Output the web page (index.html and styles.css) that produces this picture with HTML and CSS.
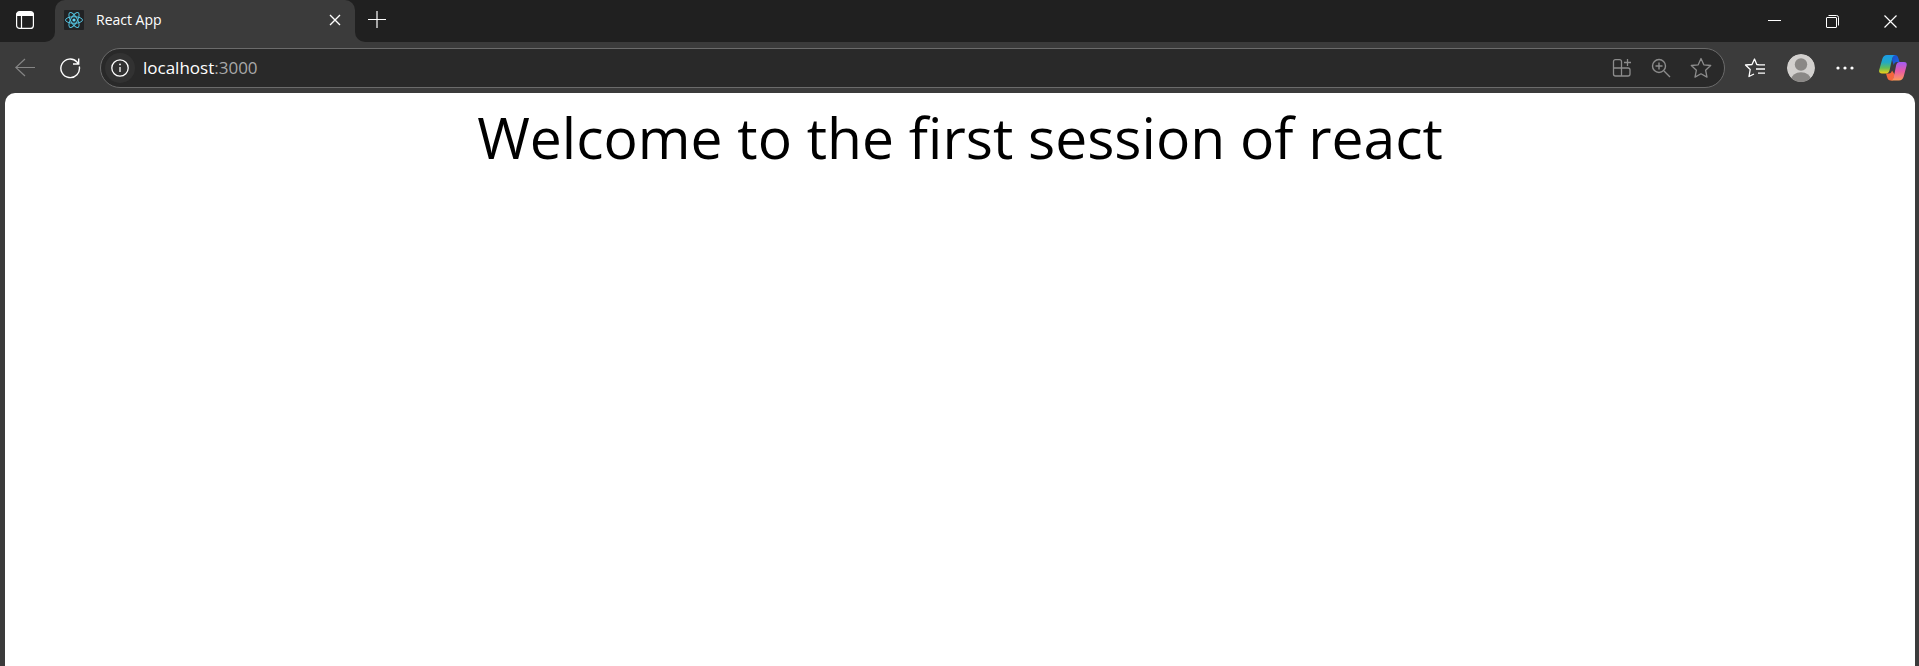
FILE: index.html
```html
<!DOCTYPE html>
<html lang="en">
<head>
<meta charset="utf-8">
<title>React App</title>
<link rel="stylesheet" href="styles.css">
</head>
<body>
<header class="browser">
  <div class="titlebar">
    <div class="workspace">
      <button class="icon-button" aria-label="Tab actions">
        <svg width="20" height="20" viewBox="0 0 20 20" fill="none" stroke="#fff" stroke-width="1.2"><rect x="1.6" y="1.6" width="16.8" height="16.8" rx="3"/><path d="M2 3.5Q3 2 5 2H15Q17 2 18 3.5V5.500H2Z" fill="#fff"/><path d="M6.5 6V18"/></svg>
      </button>
    </div>
    <div class="tab-slot">
      <div class="tab">
        <svg class="favicon" width="20" height="20" viewBox="0 0 20 20" fill="none" stroke="#53c1de" stroke-width="1"><rect width="20" height="20" rx="1" fill="#212224" stroke="none"/><ellipse cx="10" cy="10" rx="8.5" ry="3.3"/><ellipse cx="10" cy="10" rx="8.5" ry="3.3" transform="rotate(60 10 10)"/><ellipse cx="10" cy="10" rx="8.5" ry="3.3" transform="rotate(120 10 10)"/><circle cx="10" cy="10" r="1.6" fill="#61dafb" stroke="none"/></svg>
        <span class="tab-title">React App</span>
        <button class="icon-button tab-close" aria-label="Close tab">
          <svg width="12" height="12" viewBox="0 0 12 12" stroke="#fff" stroke-width="1.4"><path d="M1 1L11 11M11 1L1 11"/></svg>
        </button>
      </div>
    </div>
    <div class="title-rest">
      <button class="icon-button new-tab" aria-label="New tab">
        <svg width="18" height="18" viewBox="0 0 18 18" stroke="#fff" stroke-width="1.2"><path d="M0 9.5H18M9 1V18"/></svg>
      </button>
      <div class="window-controls">
        <button class="window-button" aria-label="Minimize">
          <svg width="13" height="13" viewBox="0 0 13 13" stroke="#fff"><path d="M0 5.5H13"/></svg>
        </button>
        <button class="window-button" aria-label="Restore">
          <svg width="13" height="13" viewBox="0 0 13 13" fill="none" stroke="#fff"><rect x=".5" y="2.5" width="10" height="10" rx=".5"/><path d="M2.5 .5H10.500Q12.5 .5 12.5 2.500V10.5"/></svg>
        </button>
        <button class="window-button" aria-label="Close">
          <svg width="13" height="13" viewBox="0 0 13 13" stroke="#fff" stroke-width="1.2"><path d="M.5 .5L12.5 12.5M12.5 .5L.5 12.5"/></svg>
        </button>
      </div>
    </div>
  </div>
  <div class="toolbar">
    <div class="nav">
      <button class="icon-button" aria-label="Back">
        <svg width="20" height="20" viewBox="0 0 20 20" fill="none" stroke="#858585" stroke-width="1.2"><path d="M20 9.5H.8M10 1L.8 9.5L10 18"/></svg>
      </button>
      <button class="icon-button" aria-label="Refresh">
        <svg width="22" height="22" viewBox="0 0 22 22" fill="none" stroke="#fff" stroke-width="1.4"><path d="M20.3 9.5A9.3 9.3 0 1 1 18 5L19.7 7M19.7 1.5V7H14"/></svg>
      </button>
    </div>
    <div class="address">
      <button class="site-info" aria-label="Site information">
        <svg width="18" height="18" viewBox="0 0 18 18" fill="none" stroke="#fff" stroke-width="1.3"><circle cx="9" cy="9" r="8.2"/><path d="M9 8V13"/><circle cx="9" cy="5.4" r=".9" fill="#fff" stroke="none"/></svg>
      </button>
      <a class="url" href="#page"><span class="host">localhost</span>:3000</a>
      <div class="address-actions">
        <button class="icon-button" aria-label="App available">
          <svg width="20" height="20" viewBox="0 0 20 20" fill="none" stroke="#8c8c8c" stroke-width="1.3"><path d="M9.5 10V3.6Q9.5 1.6 7.5 1.6H3.5Q1.5 1.6 1.5 3.6V16Q1.5 18 3.5 18H16Q18 18 18 16V12Q18 10 16 10H1.5M9.5 10V18M15.5 1V8M12 4.5H19"/></svg>
        </button>
        <button class="icon-button" aria-label="Zoom">
          <svg width="20" height="20" viewBox="0 0 20 20" fill="none" stroke="#8c8c8c" stroke-width="1.4"><circle cx="8" cy="8" r="6.5"/><path d="M13 13L19 19M8 4.5V11.5M4.5 8H11.5"/></svg>
        </button>
        <button class="icon-button" aria-label="Add to favorites">
          <svg width="22" height="22" viewBox="0 0 22 22" fill="none" stroke="#8c8c8c" stroke-width="1.3" stroke-linejoin="round"><path d="M11 1.5L13.8 7.8L20.7 8.5L15.6 13.2L17 20.1L11 16.8L5 20.1L6.4 13.2L1.3 8.5L8.2 7.8Z"/></svg>
        </button>
      </div>
    </div>
    <div class="tools">
      <button class="icon-button" aria-label="Favorites">
        <svg width="22" height="22" viewBox="0 0 22 22" fill="none" stroke="#fff" stroke-width="1.3" stroke-linejoin="round"><path d="M15.2 7.8L12.8 7.5L10.5 2L8 7.5L1.5 8L6.2 12.5L5 19.5L10 17M13 7.9H21M12 12H21M14 16.2H21"/></svg>
      </button>
      <button class="icon-button" aria-label="Profile">
        <svg width="28" height="28" viewBox="0 0 28 28"><defs><clipPath id="face"><circle cx="14" cy="14" r="14"/></clipPath></defs><g clip-path="url(#face)"><circle cx="14" cy="14" r="14" fill="#d2d0ce"/><circle cx="14" cy="10.5" r="6.2" fill="#8a8886"/><ellipse cx="14" cy="26" rx="10" ry="7.7" fill="#8a8886"/></g></svg>
      </button>
      <button class="icon-button" aria-label="Settings and more">
        <svg width="18" height="18" viewBox="0 0 18 18" fill="#fff"><circle cx="2" cy="9" r="1.6"/><circle cx="9" cy="9" r="1.6"/><circle cx="16" cy="9" r="1.6"/></svg>
      </button>
      <button class="icon-button copilot" aria-label="Copilot">
        <svg width="28" height="26" viewBox="0 0 28 26">
          <defs>
            <linearGradient id="cool" x1="0" y1="0" x2="0" y2="1"><stop offset="0" stop-color="#1b9be8"/><stop offset=".4" stop-color="#22a9c4"/><stop offset=".7" stop-color="#63bd57"/><stop offset="1" stop-color="#f3cf16"/></linearGradient>
            <linearGradient id="warm" x1="0" y1="0" x2="0" y2="1"><stop offset="0" stop-color="#a15cf5"/><stop offset=".5" stop-color="#e75aa5"/><stop offset="1" stop-color="#ff9a58"/></linearGradient>
            <linearGradient id="fold" x1="0" y1="0" x2="1" y2="1"><stop offset="0" stop-color="#174cc8"/><stop offset="1" stop-color="#2068e6"/></linearGradient>
          </defs>
          <path d="M14 0H16Q18.500 0 19.300 3L20.500 7H18Q15.500 7 14.700 10L13 5Z" fill="url(#fold)"/>
          <path d="M13.500 25.500H11.500Q9 25.500 8.200 22.500L7 18.500H10Q12.300 18.500 13 15.500L16 20Z" fill="#f4673d"/>
          <path d="M8 0H16.500Q14.200 0 13.300 3L10.500 15.500Q9.600 18.500 7 18.500H3Q-.8 18.500 .3 14.500L3.300 4Q4.500 0 8 0Z" fill="url(#cool)"/>
          <path d="M20 25.500H11.500Q13.800 25.500 14.700 22.500L17.200 10Q18 7 20.700 7H25Q28.500 7 27.500 11L24.700 21.500Q23.500 25.500 20 25.500Z" fill="url(#warm)"/>
        </svg>
      </button>
    </div>
  </div>
</header>
<main class="page" id="page">
  <h1 class="welcome">Welcome to the first session of react</h1>
</main>
</body>
</html>
```
FILE: styles.css
```css
* {
  box-sizing: border-box;
}

body {
  margin: 0;
  min-height: 100vh;
  display: flex;
  flex-direction: column;
  background: #3b3b3b;
  font-family: "Segoe UI", "Open Sans", "Noto Sans", sans-serif;
}

button {
  display: flex;
  align-items: center;
  justify-content: center;
  padding: 0;
  border: 0;
  background: none;
}

svg {
  display: block;
  flex: none;
}

.titlebar {
  display: flex;
  height: 42px;
}

.workspace {
  width: 55px;
  padding: 10px 15px;
  background: #202020;
  border-bottom-right-radius: 10px;
}

.tab-slot {
  width: 300px;
  background: linear-gradient(#202020 50%, #3b3b3b 50%);
}

.tab {
  display: flex;
  align-items: center;
  height: 100%;
  padding: 0 14px 2px 9px;
  background: #3b3b3b;
  border-radius: 10px 10px 0 0;
}

.tab-title {
  flex: 1;
  padding-left: 12px;
  color: #fff;
  font-size: 14px;
  line-height: 20px;
}

.title-rest {
  flex: 1;
  display: flex;
  align-items: center;
  justify-content: space-between;
  padding-left: 13px;
  background: #202020;
  border-bottom-left-radius: 10px;
}

.new-tab {
  padding-bottom: 4px;
}

.window-controls {
  display: flex;
}

.window-button {
  width: 58px;
  height: 42px;
}

.toolbar {
  display: flex;
  align-items: center;
  height: 51px;
}

.nav {
  display: flex;
  align-items: center;
  gap: 24px;
  padding: 0 19px 0 15px;
}

.address {
  flex: 1;
  display: flex;
  align-items: center;
  height: 40px;
  padding: 0 12px 0 4px;
  border: 1px solid #6b6b6b;
  border-radius: 20px;
  background: #292929;
}

.site-info {
  width: 30px;
  height: 30px;
  border-radius: 50%;
  background: #323232;
}

.url {
  flex: 1;
  padding-left: 8px;
  color: #a8a8a8;
  font-size: 17px;
  line-height: 24px;
  text-decoration: none;
}

.host {
  color: #fff;
}

.address-actions {
  display: flex;
  align-items: center;
  gap: 19px;
}

.tools {
  display: flex;
  align-items: center;
  gap: 21px;
  padding: 0 12px 0 19px;
}

.copilot {
  padding-left: 4px;
}

.page {
  flex: 1;
  margin: 0 4px 0 5px;
  padding: 4px 16px 0;
  border-radius: 10px 10px 0 0;
  background: #fff;
}

.welcome {
  margin: 0;
  color: #000;
  font-size: 57px;
  font-weight: 400;
  line-height: 80px;
  text-align: center;
}
```
